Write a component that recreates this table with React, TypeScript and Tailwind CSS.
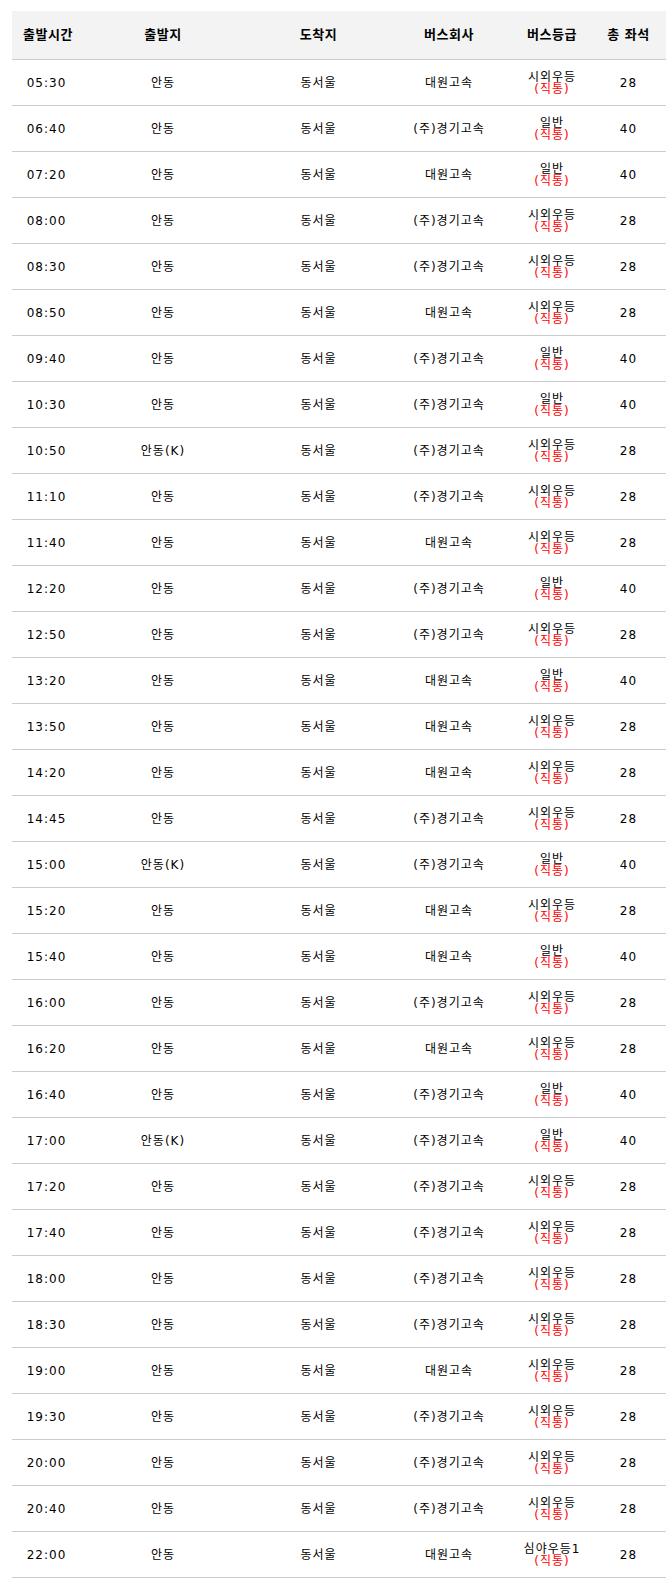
import React from "react";

type Bus = {
  time: string;
  from: string;
  company: string;
  grade: string;
  seats: number;
};

const raw: [string, string, string, string][] = [
  ["05:30", "안동", "대원고속", "시외우등"],
  ["06:40", "안동", "(주)경기고속", "일반"],
  ["07:20", "안동", "대원고속", "일반"],
  ["08:00", "안동", "(주)경기고속", "시외우등"],
  ["08:30", "안동", "(주)경기고속", "시외우등"],
  ["08:50", "안동", "대원고속", "시외우등"],
  ["09:40", "안동", "(주)경기고속", "일반"],
  ["10:30", "안동", "(주)경기고속", "일반"],
  ["10:50", "안동(K)", "(주)경기고속", "시외우등"],
  ["11:10", "안동", "(주)경기고속", "시외우등"],
  ["11:40", "안동", "대원고속", "시외우등"],
  ["12:20", "안동", "(주)경기고속", "일반"],
  ["12:50", "안동", "(주)경기고속", "시외우등"],
  ["13:20", "안동", "대원고속", "일반"],
  ["13:50", "안동", "대원고속", "시외우등"],
  ["14:20", "안동", "대원고속", "시외우등"],
  ["14:45", "안동", "(주)경기고속", "시외우등"],
  ["15:00", "안동(K)", "(주)경기고속", "일반"],
  ["15:20", "안동", "대원고속", "시외우등"],
  ["15:40", "안동", "대원고속", "일반"],
  ["16:00", "안동", "(주)경기고속", "시외우등"],
  ["16:20", "안동", "대원고속", "시외우등"],
  ["16:40", "안동", "(주)경기고속", "일반"],
  ["17:00", "안동(K)", "(주)경기고속", "일반"],
  ["17:20", "안동", "(주)경기고속", "시외우등"],
  ["17:40", "안동", "(주)경기고속", "시외우등"],
  ["18:00", "안동", "(주)경기고속", "시외우등"],
  ["18:30", "안동", "(주)경기고속", "시외우등"],
  ["19:00", "안동", "대원고속", "시외우등"],
  ["19:30", "안동", "(주)경기고속", "시외우등"],
  ["20:00", "안동", "(주)경기고속", "시외우등"],
  ["20:40", "안동", "(주)경기고속", "시외우등"],
  ["22:00", "안동", "대원고속", "심야우등1"],
];

const buses: Bus[] = raw.map(([time, from, company, grade]) => ({
  time,
  from,
  company,
  grade,
  seats: grade === "일반" ? 40 : 28,
}));

const font = {
  fontFamily: '"DejaVu Sans", "Noto Sans CJK KR", sans-serif',
};

export default function App() {
  return (
    <div className="bg-white min-h-[1594px] pt-[11px] px-[12px] text-black" style={font}>
      <div className="w-[654px]">
        {/* header */}
        <div className="flex h-[49px] items-center bg-[#f3f3f3] border-b border-[#cccccc] text-[13px] font-bold tracking-[0.5px]">
          <div className="w-[72px] text-center">출발시간</div>
          <div className="w-[158px] text-center">출발지</div>
          <div className="w-[153px] text-center">도착지</div>
          <div className="w-[108px] text-center">버스회사</div>
          <div className="w-[98px] text-center">버스등급</div>
          <div className="w-[65px] pr-[10px] text-center">총 좌석</div>
        </div>

        {buses.map((b) => (
          <div
            key={b.time}
            className="flex h-[46px] items-center border-b border-[#cccccc] text-[12px] tracking-[1px]"
          >
            <div className="w-[72px] pr-[3px] text-center">{b.time}</div>
            <div className="w-[158px] text-center">{b.from}</div>
            <div className="w-[153px] text-center">동서울</div>
            <div className="w-[108px] text-center">{b.company}</div>
            <div className="w-[98px] flex flex-col items-center leading-[12px]">
              <span>{b.grade}</span>
              <span className="text-[#ff0000]">(직통)</span>
            </div>
            <div className="w-[65px] pr-[10px] text-center">{b.seats}</div>
          </div>
        ))}
      </div>
    </div>
  );
}
